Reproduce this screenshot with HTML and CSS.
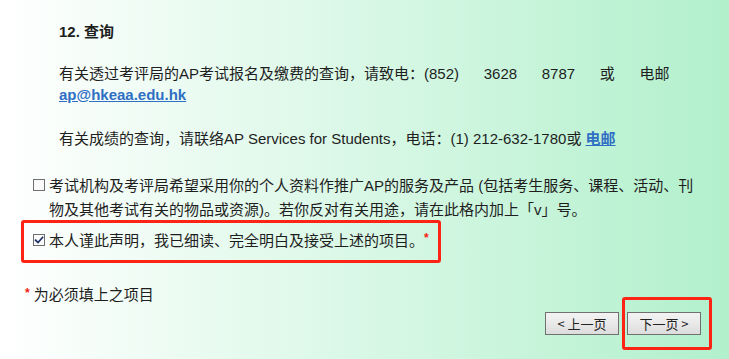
FILE: index.html
```html
<!DOCTYPE html>
<html lang="zh-CN">
<head>
<meta charset="utf-8">
<title>查询</title>
<link rel="stylesheet" href="styles.css">
</head>
<body>
<div class="page">
  <h3 class="title">12. 查询</h3>
  <p class="para">有关透过考评局的AP考试报名及缴费的查询，请致电：<span class="spread">(852) 3628 8787 或 <span class="nowrap">电邮</span></span> <a class="link" href="#">ap@hkeaa.edu.hk</a></p>
  <p class="para para-last">有关成绩的查询，请联络AP Services for Students，电话：(1) 212-632-1780或 <a class="link" href="#">电邮</a></p>

  <div class="check-row">
    <span class="box"></span>
    <span class="check-text">考试机构及考评局希望采用你的个人资料作推广AP的服务及产品 (包括考生服务、课程、活动、刊物及其他考试有关的物品或资源)。若你反对有关用途，请在此格内加上「v」号。</span>
  </div>

  <div class="check-row highlight">
    <span class="box"><svg class="tick" viewBox="0 0 10 10" width="10" height="10"><path d="M1.6 5.2 L4 7.6 L8.6 2.4" fill="none" stroke="#1d2f66" stroke-width="1.7" stroke-linecap="square"/></svg></span>
    <span class="check-text">本人谨此声明，我已细读、完全明白及接受上述的项目。<sup class="req">*</sup></span>
  </div>

  <p class="note"><span class="req">*</span> 为必须填上之项目</p>

  <div class="actions">
    <button class="btn" type="button">&lt; 上一页</button>
    <span class="marked"><button class="btn" type="button">下一页 &gt;</button></span>
  </div>
</div>
</body>
</html>
```

FILE: styles.css
```css
html, body {
  margin: 0;
  padding: 0;
  height: 100%;
}

body {
  background: linear-gradient(to right, #ffffff 0%, #b2f0cc 100%);
  font-family: "Liberation Sans", "Noto Sans CJK SC", sans-serif;
  font-size: 15px;
  color: #1e1e1e;
}

.page {
  padding: 21px 28px 0 21px;
}

.title {
  margin: 0 30px 21px 38px;
  font-size: 15px;
  line-height: 21px;
  font-weight: bold;
}

.para {
  margin: 0 30px 23px 38px;
  line-height: 21px;
}

.para-last {
  margin-bottom: 25px;
}

.spread {
  word-spacing: 20.5px;
}

.nowrap {
  white-space: nowrap;
}

.link {
  color: #2f6fc4;
  font-weight: bold;
  text-decoration: underline;
}

.check-row {
  display: flex;
  align-items: flex-start;
  padding-left: 12px;
  line-height: 24px;
}

.box {
  flex: none;
  box-sizing: border-box;
  width: 12px;
  height: 12px;
  margin-top: 5px;
  margin-right: 4px;
  border: 1px solid #6f6f6f;
  background: #fbfbfb;
  display: flex;
  align-items: center;
  justify-content: center;
}

.tick {
  display: block;
}

.check-text {
  flex: 1;
}

.highlight {
  width: fit-content;
  margin-top: -2px;
  padding: 6px 9px 7px 9px;
  border: 3px solid #fd2415;
  border-radius: 3px;
}

.highlight .check-text {
  flex: none;
}

.req {
  color: #f21c12;
  font-weight: bold;
  font-size: 12px;
}

sup.req {
  vertical-align: 4px;
  line-height: 0;
}

.note {
  margin: 20px 0 0 0;
  padding-left: 4px;
  line-height: 21px;
}

.note .req {
  vertical-align: 3px;
}

.actions {
  display: flex;
  justify-content: flex-end;
  align-items: center;
  gap: 8px;
  margin-top: 7px;
}

.btn {
  box-sizing: border-box;
  width: 74px;
  height: 23px;
  padding: 0;
  border: 1px solid #707070;
  border-radius: 0;
  background: linear-gradient(to bottom, #f3f3f3 0%, #e9e9e9 50%, #dcdcdc 100%);
  font-family: "Noto Sans CJK SC", "Liberation Sans", sans-serif;
  font-size: 13px;
  color: #222;
  line-height: 21px;
}

.marked {
  position: relative;
  display: block;
}

.marked .btn {
  display: block;
}

.marked::after {
  content: "";
  position: absolute;
  top: -15px;
  bottom: -15px;
  left: -5px;
  right: -11px;
  border: 3px solid #fd2415;
  border-radius: 3px;
  pointer-events: none;
}
```
